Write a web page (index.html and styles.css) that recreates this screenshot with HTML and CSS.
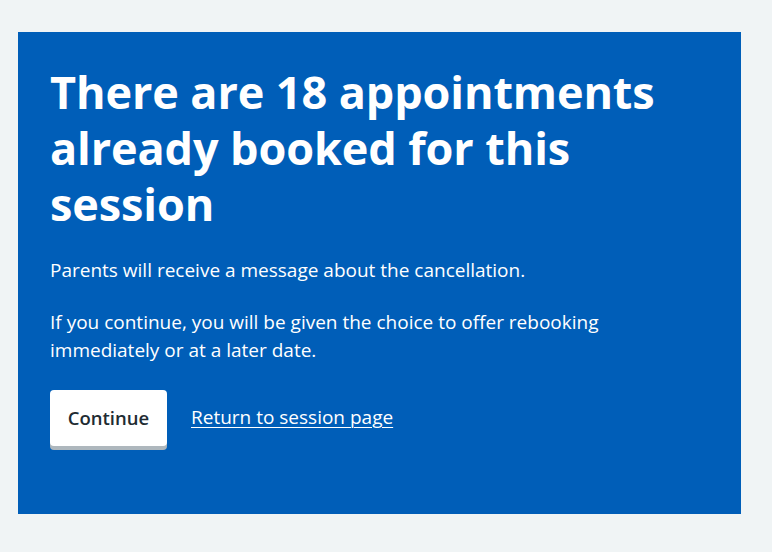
FILE: index.html
```html
<!DOCTYPE html>
<html lang="en">
<head>
<meta charset="utf-8">
<title>Cancel session</title>
<link rel="stylesheet" href="styles.css">
</head>
<body>
<main class="page">
  <section class="panel">
    <h1 class="panel__title">There are 18 appointments already booked for this session</h1>
    <p class="panel__text">Parents will receive a message about the cancellation.</p>
    <p class="panel__text">If you continue, you will be given the choice to offer rebooking immediately or at a later date.</p>
    <div class="actions">
      <button class="button" type="button">Continue</button>
      <a class="link" href="#">Return to session page</a>
    </div>
  </section>
</main>
</body>
</html>
```
FILE: styles.css
```css
html, body {
  margin: 0;
  padding: 0;
  background: #f0f4f5;
}
body {
  font-family: "Open Sans", "Noto Sans", "Liberation Sans", sans-serif;
  color: #fff;
}
.page {
  padding: 32px 31px 38px 18px;
}
.panel {
  background: #005eb8;
  padding: 32px 32px 32px 32px;
  height: 418px;
}
.panel__title {
  margin: 0 0 24px;
  font-size: 45px;
  line-height: 56px;
  font-weight: 700;
  letter-spacing: -0.1px;
  max-width: 640px;
}
.panel__text {
  margin: 0 0 24px;
  font-size: 19px;
  line-height: 28px;
  max-width: 620px;
}
.actions {
  display: flex;
  align-items: center;
  gap: 24px;
  margin-top: 26px;
}
.button {
  font-family: inherit;
  font-size: 18.5px;
  font-weight: 600;
  color: #212b32;
  background: #fff;
  border: 0;
  border-radius: 4px;
  box-shadow: 0 4px 0 #aeb7bd;
  width: 117px;
  height: 56px;
  padding: 0 0 2px;
  margin-bottom: 4px;
}
.link {
  color: #fff;
  font-size: 19px;
  line-height: 28px;
  margin-bottom: 6px;
  text-decoration: underline;
  text-underline-offset: 3px;
  text-decoration-thickness: 1px;
}
```
